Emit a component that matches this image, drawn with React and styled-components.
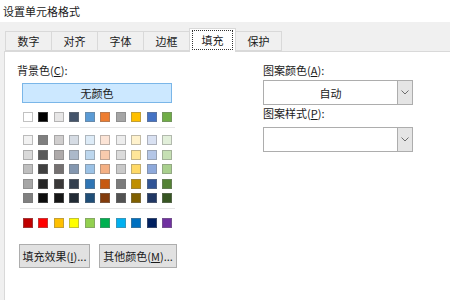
import React from 'react';
import styled, { createGlobalStyle } from 'styled-components';

const Global = createGlobalStyle`
  html, body { margin: 0; padding: 0; background: #fff; }
  body {
    font-family: "Noto Sans CJK SC", "Microsoft YaHei", sans-serif;
    font-size: 11px;
    color: #1a1a1a;
  }
`;

const Window = styled.div`
  width: 450px;
  height: 300px;
  display: flex;
  flex-direction: column;
  background: #f0f0f0;
  overflow: hidden;
`;

const TitleBar = styled.div`
  height: 22px;
  flex: none;
  background: #fff;
  padding-left: 3px;
  display: flex;
  align-items: center;
  font-size: 11px;
  line-height: 1;
`;

const Body = styled.div`
  flex: 1;
  display: flex;
  flex-direction: column;
  padding-left: 4px;
`;

const Tabs = styled.div`
  height: 29px;
  flex: none;
  display: flex;
  align-items: flex-end;
  padding-left: 1px;
  position: relative;
  z-index: 1;
`;

const Tab = styled.div`
  box-sizing: border-box;
  width: 47px;
  height: ${p => (p.$active ? 24 : 20)}px;
  margin-left: -1px;
  margin-bottom: ${p => (p.$active ? -1 : 0)}px;
  border: 1px solid #d9d9d9;
  border-bottom: ${p => (p.$active ? 'none' : '1px solid #d9d9d9')};
  background: ${p => (p.$active ? '#fff' : '#f0f0f0')};
  display: flex;
  align-items: center;
  justify-content: center;
  padding: ${p => (p.$active ? '1px 2px 2px' : '0')};
  position: relative;
  z-index: ${p => (p.$active ? 2 : 1)};
  &:first-child { margin-left: 0; }
`;

const Focus = styled.div`
  box-sizing: border-box;
  width: 100%;
  height: 100%;
  border: 1px dotted #333;
  display: flex;
  align-items: center;
  justify-content: center;
`;

const Panel = styled.div`
  flex: 1;
  background: #fff;
  border-top: 1px solid #d9d9d9;
  border-left: 1px solid #d9d9d9;
  display: flex;
  padding: 11px 0 0 12px;
`;

const LeftCol = styled.div`
  width: 160px;
  display: flex;
  flex-direction: column;
`;

const RightCol = styled.div`
  margin-left: 86px;
  width: 150px;
  display: flex;
  flex-direction: column;
`;

const Label = styled.div`
  height: 14px;
  line-height: 14px;
  white-space: nowrap;
  margin-top: ${p => p.$mt || 0}px;
  u { text-decoration: underline; text-underline-offset: 1px; }
`;

const NoColor = styled.div`
  box-sizing: border-box;
  margin: 6px 0 0 5px;
  width: 150px;
  height: 20px;
  background: #cce8ff;
  border: 1px solid #7ab6e8;
  display: flex;
  align-items: center;
  justify-content: center;
`;

const SwatchRow = styled.div`
  margin-left: 6px;
  width: 149px;
  height: 10px;
  display: flex;
  justify-content: space-between;
  margin-top: ${p => p.$mt || 0}px;
`;

const Swatch = styled.div`
  box-sizing: border-box;
  width: 10px;
  height: 10px;
  background: ${p => p.$c};
  border: 1px solid rgba(120,120,120,0.45);
`;

const Grid = styled.div`
  display: flex;
  flex-direction: column;
  gap: 4.5px;
  margin-top: 7px;
`;

const Separator = styled.div`
  margin: ${p => p.$mt || 0}px 0 0 3px;
  width: 155px;
  height: 1px;
  background: #e6e6e6;
`;

const ButtonRow = styled.div`
  display: flex;
  gap: 9px;
  margin: 16px 0 0 2px;
`;

const Button = styled.div`
  box-sizing: border-box;
  width: ${p => p.$w}px;
  height: 24px;
  background: #e1e1e1;
  border: 1px solid #adadad;
  display: flex;
  align-items: center;
  justify-content: center;
  white-space: nowrap;
  u { text-decoration: underline; text-underline-offset: 1px; }
`;

const Select = styled.div`
  box-sizing: border-box;
  width: 150px;
  height: 25px;
  margin-top: ${p => p.$mt || 0}px;
  border: 1px solid #adadad;
  background: #fff;
  display: flex;
`;

const SelectValue = styled.div`
  flex: 1;
  display: flex;
  align-items: center;
  justify-content: center;
`;

const Arrow = styled.div`
  box-sizing: border-box;
  width: 16px;
  margin: -1px -1px -1px 0;
  border: 1px solid #adadad;
  background: #e5e5e5;
  display: flex;
  align-items: center;
  justify-content: center;
`;

const themeRow = ['#ffffff', '#000000', '#e7e6e6', '#44546a', '#5b9bd5', '#ed7d31', '#a5a5a5', '#ffc000', '#4472c4', '#70ad47'];
const tints = [
  ['#f2f2f2', '#7f7f7f', '#d0cece', '#d6dce4', '#ddebf7', '#fce4d6', '#ededed', '#fff2cc', '#d9e1f2', '#e2efda'],
  ['#d9d9d9', '#595959', '#aeaaaa', '#acb9ca', '#bdd7ee', '#f8cbad', '#dbdbdb', '#ffe699', '#b4c6e7', '#c6e0b4'],
  ['#bfbfbf', '#404040', '#757171', '#8497b0', '#9bc2e6', '#f4b084', '#c9c9c9', '#ffd966', '#8ea9db', '#a9d08e'],
  ['#a6a6a6', '#262626', '#3a3838', '#333f4f', '#2f75b5', '#c65911', '#7b7b7b', '#bf8f00', '#305496', '#548235'],
  ['#808080', '#0d0d0d', '#161616', '#222b35', '#1f4e78', '#833c0c', '#525252', '#806000', '#203764', '#375623'],
];
const standard = ['#c00000', '#ff0000', '#ffc000', '#ffff00', '#92d050', '#00b050', '#00b0f0', '#0070c0', '#002060', '#7030a0'];

const tabs = ['数字', '对齐', '字体', '边框', '填充', '保护'];

const Chevron = () => (
  <svg width="8" height="5" viewBox="0 0 8 5">
    <path d="M0.5 0.5 L4 4 L7.5 0.5" fill="none" stroke="#6d6d6d" strokeWidth="1" />
  </svg>
);

export default function App() {
  return (
    <Window>
      <Global />
      <TitleBar>设置单元格格式</TitleBar>
      <Body>
        <Tabs>
          {tabs.map(t => (
            <Tab key={t} $active={t === '填充'}>
              {t === '填充' ? <Focus>{t}</Focus> : t}
            </Tab>
          ))}
        </Tabs>
        <Panel>
          <LeftCol>
            <Label>背景色(<u>C</u>):</Label>
            <NoColor>无颜色</NoColor>
            <SwatchRow $mt={9}>
              {themeRow.map((c, i) => <Swatch key={i} $c={c} />)}
            </SwatchRow>
            <Separator $mt={5} />
            <Grid>
              {tints.map((row, r) => (
                <SwatchRow key={r}>
                  {row.map((c, i) => <Swatch key={i} $c={c} />)}
                </SwatchRow>
              ))}
            </Grid>
            <Separator $mt={5} />
            <SwatchRow $mt={9}>
              {standard.map((c, i) => <Swatch key={i} $c={c} />)}
            </SwatchRow>
            <ButtonRow>
              <Button $w={73}>填充效果(<u>I</u>)...</Button>
              <Button $w={80}>其他颜色(<u>M</u>)...</Button>
            </ButtonRow>
          </LeftCol>
          <RightCol>
            <Label>图案颜色(<u>A</u>):</Label>
            <Select $mt={3}>
              <SelectValue>自动</SelectValue>
              <Arrow><Chevron /></Arrow>
            </Select>
            <Label $mt={1}>图案样式(<u>P</u>):</Label>
            <Select $mt={7}>
              <SelectValue />
              <Arrow><Chevron /></Arrow>
            </Select>
          </RightCol>
        </Panel>
      </Body>
    </Window>
  );
}
